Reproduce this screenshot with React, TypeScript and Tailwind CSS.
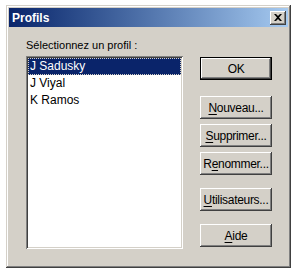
import { JSX } from "react";

const raised =
  "shadow-[inset_-1px_-1px_#404040,inset_1px_1px_#ffffff,inset_-2px_-2px_#808080,inset_2px_2px_#d4d0c8]";

function Btn({
  pre,
  u,
  post,
  className = "",
  isDefault = false,
}: {
  pre?: string;
  u?: string;
  post?: string;
  className?: string;
  isDefault?: boolean;
}): JSX.Element {
  return (
    <div
      className={
        "w-[72px] h-[23px] flex items-center justify-center bg-[#d4d0c8] text-black " +
        (isDefault
          ? "border border-black shadow-[inset_-1px_-1px_#404040,inset_1px_1px_#ffffff,inset_-2px_-2px_#808080] "
          : raised + " ") +
        className
      }
    >
      <span>
        {pre}
        {u && <span className="underline underline-offset-2">{u}</span>}
        {post}
      </span>
    </div>
  );
}

export default function App(): JSX.Element {
  const profiles = ["J Sadusky", "J Viyal", "K Ramos"];

  return (
    <div
      className="w-[295px] h-[270px] bg-white pt-[5px] pl-[6px] text-[11px]"
      style={{ fontFamily: '"Liberation Sans", Arial, sans-serif' }}
    >
      <div className="w-[285px] h-[263px] bg-[#d4d0c8] p-[3px] flex flex-col shadow-[inset_-1px_-1px_#404040,inset_1px_1px_#d4d0c8,inset_-2px_-2px_#808080,inset_2px_2px_#ffffff]">
        {/* barre de titre */}
        <div className="h-[19px] flex items-center justify-between pl-[3px] pr-[2px] bg-gradient-to-r from-[#0a246a] to-[#a6caf0]">
          <span className="text-white font-bold text-[12px]">Profils</span>
          <div
            className={
              "w-[16px] h-[14px] bg-[#d4d0c8] flex items-center justify-center " +
              raised
            }
          >
            <svg width="8" height="7" viewBox="0 0 8 7">
              <path
                d="M0 0h2l2 2 2-2h2L5 3.5 8 7H6L4 5 2 7H0l3-3.5z"
                fill="black"
              />
            </svg>
          </div>
        </div>

        <div className="flex flex-row pl-[17px]">
          {/* colonne gauche */}
          <div className="flex flex-col">
            <div className="mt-[12px] h-[13px] leading-[13px]">
              Sélectionnez un profil :
            </div>
            <div className="mt-[4px] w-[157px] h-[193px] bg-white p-[2px] shadow-[inset_1px_1px_#808080,inset_-1px_-1px_#ffffff,inset_2px_2px_#404040,inset_-2px_-2px_#d4d0c8]">
              {profiles.map((p, i) => (
                <div
                  key={p}
                  className={
                    "h-[17px] leading-[17px] pl-[2px] text-[12px] " +
                    (i === 0
                      ? "bg-[#0a246a] text-white outline outline-1 outline-dotted outline-[#d4d0c8] -outline-offset-1"
                      : "text-black")
                  }
                >
                  {p}
                </div>
              ))}
            </div>
          </div>

          {/* colonne droite */}
          <div className="flex flex-col ml-[17px] pt-[30px] text-[12px] tracking-[-0.3px]">
            <Btn pre="OK" isDefault />
            <Btn u="N" post="ouveau..." className="mt-[16px]" />
            <Btn u="S" post="upprimer..." className="mt-[5px]" />
            <Btn pre="R" u="e" post="nommer..." className="mt-[5px]" />
            <Btn u="U" post="tilisateurs..." className="mt-[13px]" />
            <Btn u="A" post="ide" className="mt-[13px]" />
          </div>
        </div>
      </div>
    </div>
  );
}
